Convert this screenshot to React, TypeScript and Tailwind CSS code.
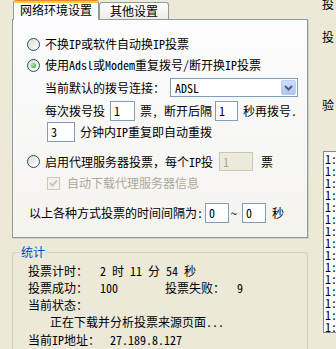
import React from 'react';

function Radio({ checked }: { checked?: boolean }) {
  return (
    <span className="relative shrink-0 w-[13px] h-[13px] rounded-full border border-[#1C5180] bg-linear-to-br from-[#DCD9CD] to-white">
      {checked && (
        <span className="absolute inset-[3px] rounded-full bg-[radial-gradient(circle_at_35%_35%,#A6EBA6,#21A121)]" />
      )}
    </span>
  );
}

function Field({ value, className = '', disabled }: { value: string; className?: string; disabled?: boolean }) {
  return (
    <div
      className={
        disabled
          ? `h-[20px] shrink-0 border border-[#C9C7BA] bg-[#EBEADB] text-[#ACA899] pl-[3px] flex items-center ${className}`
          : `h-[20px] shrink-0 border border-[#7F9DB9] bg-white pl-[3px] flex items-center ${className}`
      }
    >
      {value}
    </div>
  );
}

export default function App() {
  return (
    <div className="w-[336px] h-[349px] bg-[#ECE9D8] overflow-hidden flex text-[12px] leading-[16px] text-black font-['Noto_Sans_Mono_CJK_SC','Noto_Sans_CJK_SC',sans-serif]">
      <div className="ml-[12px] w-[296px] shrink-0 flex flex-col">
        {/* tabs */}
        <div className="h-[19px] shrink-0 flex items-end pl-[1px]">
          <div className="relative z-10 -mb-px w-[86px] h-[20px] flex flex-col bg-[#FCFCFE] border-x border-t border-[#919B9C] border-t-[#E68B2C] rounded-t-[3px]">
            <div className="h-[2px] bg-[#FFC73C]" />
            <div className="text-center leading-[14px]">网络环境设置</div>
          </div>
          <div className="w-[70px] h-[17px] border border-b-0 border-[#919B9C] rounded-t-[3px] bg-linear-to-b from-white to-[#ECEBE6] text-center leading-[16px]">
            其他设置
          </div>
        </div>

        {/* tab page */}
        <div className="h-[219px] shrink-0 border border-[#919B9C] bg-linear-to-b from-[#FCFCFE] to-[#F4F3EE] shadow-[1px_1px_0_#D0CEBF] flex flex-col pl-[14px] pt-[16px]">
          <div className="h-[16px] flex items-center gap-[5px]">
            <Radio />
            <span>不换IP或软件自动换IP投票</span>
          </div>
          <div className="mt-[5px] h-[16px] flex items-center gap-[5px]">
            <Radio checked />
            <span>使用Adsl或Modem重复拨号/断开换IP投票</span>
          </div>
          <div className="mt-[5px] ml-[18px] h-[19px] flex items-center">
            <span>当前默认的拨号连接：</span>
            <div className="ml-[5px] w-[128px] h-[19px] border border-[#7F9DB9] bg-white flex items-center justify-between">
              <span className="pl-[4px]">ADSL</span>
              <div className="mr-[1px] w-[15px] h-[15px] rounded-[2px] border border-[#B9CDF5] bg-linear-to-b from-[#D2DEFB] to-[#ADC3F4] flex items-center justify-center">
                <svg width="9" height="6" viewBox="0 0 9 6">
                  <path d="M1 1 L4.5 4.5 L8 1" fill="none" stroke="#4D6185" strokeWidth="2" />
                </svg>
              </div>
            </div>
          </div>
          <div className="mt-[4px] ml-[18px] h-[20px] flex items-center">
            <span>每次拨号投</span>
            <Field value="1" className="ml-[5px] w-[25px]" />
            <span className="ml-[5px] whitespace-pre">票, 断开后隔</span>
            <Field value="1" className="ml-[3px] w-[23px]" />
            <span className="ml-[5px]">秒再拨号.</span>
          </div>
          <div className="mt-[1px] ml-[20px] h-[20px] flex items-center">
            <Field value="3" className="w-[28px]" />
            <span className="ml-[5px]">分钟内IP重复即自动重拨</span>
          </div>
          <div className="mt-[10px] h-[19px] flex items-center">
            <Radio />
            <span className="ml-[5px]">启用代理服务器投票，每个IP投</span>
            <Field value="1" disabled className="ml-[6px] w-[34px] !h-[19px]" />
            <span className="ml-[8px]">票</span>
          </div>
          <div className="mt-[4px] ml-[20px] h-[16px] flex items-center">
            <span className="w-[13px] h-[13px] border border-[#CAC8BB] bg-[#F2F1EA] flex items-center justify-center">
              <svg width="9" height="9" viewBox="0 0 9 9">
                <path d="M1 4 L3.5 6.5 L8 1.5" fill="none" stroke="#C3C1B7" strokeWidth="1.8" />
              </svg>
            </span>
            <span className="ml-[7px] text-[#ACA899]">自动下载代理服务器信息</span>
          </div>
          <div className="mt-[12px] ml-[2px] h-[20px] flex items-center">
            <span>以上各种方式投票的时间间隔为:</span>
            <Field value="0" className="ml-[2px] w-[24px]" />
            <span className="ml-[2px]">~</span>
            <Field value="0" className="ml-[5px] w-[24px]" />
            <span className="ml-[6px]">秒</span>
          </div>
        </div>

        {/* statistics group */}
        <div className="relative shrink-0 mt-[14px] h-[120px] border border-[#D0D0BF] rounded-[3px] pl-[15px] pt-[9px]">
          <span className="absolute -top-[9px] left-[7px] px-[1px] bg-[#ECE9D8] text-[#0046D5]">统计</span>
          <div className="h-[17px] flex items-center whitespace-pre">
            <span className="w-[72px]">投票计时：</span>
            <span>2 时 11 分 54 秒</span>
          </div>
          <div className="h-[17px] flex items-center">
            <span className="w-[72px]">投票成功：</span>
            <span className="w-[65px]">100</span>
            <span className="w-[72px]">投票失败：</span>
            <span>9</span>
          </div>
          <div className="h-[17px] flex items-center">当前状态：</div>
          <div className="h-[18px] flex items-center pl-[22px]">正在下载并分析投票来源页面...</div>
          <div className="h-[18px] flex items-center">
            <span className="w-[82px]">当前IP地址：</span>
            <span>27.189.8.127</span>
          </div>
        </div>
      </div>

      {/* right edge of neighbouring panel */}
      <div className="flex-1 flex flex-col pl-[14px] overflow-hidden">
        <div className="shrink-0 -mt-[4px] h-[16px]">投</div>
        <div className="shrink-0 mt-[17px] h-[16px]">投</div>
        <div className="shrink-0 mt-[52px] h-[16px]">验</div>
        <div className="shrink-0 mt-[38px] ml-[1px] w-[30px] h-[182px] border border-[#828790] bg-white pl-[1px] pt-[1px] leading-[12px]">
          {Array.from({ length: 15 }).map((_, i) => (
            <div key={i} className="h-[12px]">1:</div>
          ))}
        </div>
      </div>
    </div>
  );
}
